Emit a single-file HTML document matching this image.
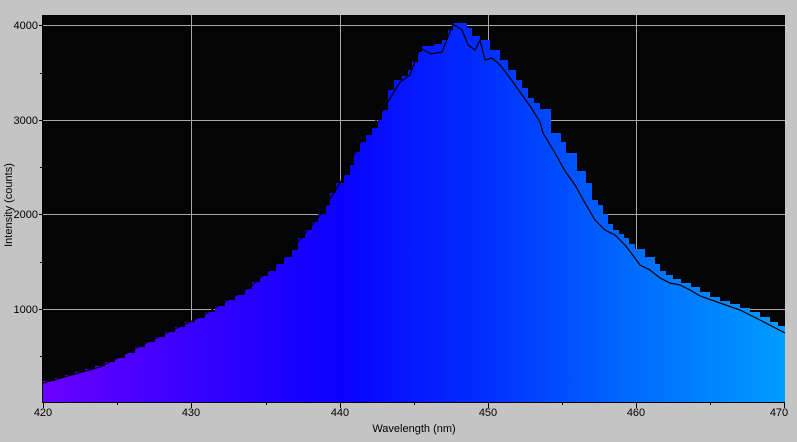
<!DOCTYPE html>
<html><head><meta charset="utf-8"><style>
html,body{margin:0;padding:0;background:#c4c4c4;}
svg{display:block;font-family:"Liberation Sans",sans-serif;}
</style></head><body>
<svg width="797" height="442" viewBox="0 0 797 442" xmlns="http://www.w3.org/2000/svg">
<defs>
<linearGradient id="g" x1="43" x2="785" y1="0" y2="0" gradientUnits="userSpaceOnUse">
<stop offset="0" stop-color="#6a00ff"/>
<stop offset="0.2" stop-color="#3800ff"/>
<stop offset="0.4" stop-color="#0a00ff"/>
<stop offset="0.6" stop-color="#0030ff"/>
<stop offset="0.8" stop-color="#006cff"/>
<stop offset="1" stop-color="#009cff"/>
</linearGradient>
</defs>
<rect x="0" y="0" width="797" height="442" fill="#c4c4c4"/>
<rect x="43" y="15" width="742" height="387" fill="#050405"/>
<g stroke="#a8a8a8" stroke-width="1">
<line x1="191.5" y1="15" x2="191.5" y2="402"/>
<line x1="340.5" y1="15" x2="340.5" y2="402"/>
<line x1="488.5" y1="15" x2="488.5" y2="402"/>
<line x1="636.5" y1="15" x2="636.5" y2="402"/>
<line x1="43" y1="25.5" x2="785" y2="25.5"/>
<line x1="43" y1="120.5" x2="785" y2="120.5"/>
<line x1="43" y1="214.5" x2="785" y2="214.5"/>
<line x1="43" y1="309.5" x2="785" y2="309.5"/>
</g>
<path fill="url(#g)" d="M43,402 V381 H55 V378 H65 V375 H75 V372 H85 V369 H95 V366 H105 V362 H115 V358 H125 V353 H135 V347 H145 V342 H155 V337 H165 V332 H175 V327 H185 V322 H195 V318 H205 V312 H215 V306 H225 V300 H235 V295 H245 V289 H252 V282 H260 V276 H268 V271 H276 V264 H284 V257 H292 V250 H298 V238 H305 V230 H312 V222 H318 V214 H326 V205 H330 V193 H336 V183 H344 V175 H350 V165 H354 V152 H360 V142 H366 V135 H372 V128 H378 V120 H382 V110 H388 V90 H394 V80 H402 V76 H408 V70 H412 V62 H418 V52 H422 V46 H434 V44 H442 V40 H448 V30 H453 V23 H467 V28 H472 V36 H480 V40 H490 V50 H500 V60 H508 V70 H516 V80 H522 V88 H528 V98 H534 V103 H540 V109 H551 V133 H561 V142 H566 V153 H577 V171 H586 V183 H592 V200 H598 V205 H603 V214 H608 V224 H613 V230 H619 V234 H624 V238 H629 V244 H635 V249 H645 V257 H655 V264 H660 V271 H666 V275 H673 V279 H681 V283 H691 V287 H700 V292 H710 V297 H720 V301 H730 V304 H740 V308 H750 V312 H760 V317 H770 V322 H778 V326 H785 V402 Z"/>
<polyline fill="none" stroke="#000" stroke-width="1.2" points="43,383 100,367 150,341 200,317 250,287 290,252 320,215 340,183 360,143 380,115 400,82 410,75 420,48 431,54 442,52 453,24 462,30 468,45 475,50 480,40 485,60 492,58 500,65 510,78 520,92 530,106 540,122 543,133 555,153 565,171 575,185 585,203 595,220 605,230 615,235 625,245 635,258 640,265 650,270 660,278 670,283 680,285 690,290 700,296 720,303 740,310 760,320 785,333"/>
<g stroke="#000" stroke-width="1">
<line x1="43" y1="402.5" x2="785" y2="402.5"/>
<line x1="42.5" y1="15" x2="42.5" y2="403"/>
<line x1="43.5" y1="402" x2="43.5" y2="408"/>
<line x1="191.5" y1="402" x2="191.5" y2="408"/>
<line x1="340.5" y1="402" x2="340.5" y2="408"/>
<line x1="488.5" y1="402" x2="488.5" y2="408"/>
<line x1="636.5" y1="402" x2="636.5" y2="408"/>
<line x1="784.5" y1="402" x2="784.5" y2="408"/>
<line x1="117.5" y1="402" x2="117.5" y2="405"/>
<line x1="266.5" y1="402" x2="266.5" y2="405"/>
<line x1="414.5" y1="402" x2="414.5" y2="405"/>
<line x1="562.5" y1="402" x2="562.5" y2="405"/>
<line x1="710.5" y1="402" x2="710.5" y2="405"/>
<line x1="39" y1="25.5" x2="43" y2="25.5"/>
<line x1="39" y1="120.5" x2="43" y2="120.5"/>
<line x1="39" y1="214.5" x2="43" y2="214.5"/>
<line x1="39" y1="309.5" x2="43" y2="309.5"/>
<line x1="40" y1="73.5" x2="43" y2="73.5"/>
<line x1="40" y1="167.5" x2="43" y2="167.5"/>
<line x1="40" y1="262.5" x2="43" y2="262.5"/>
<line x1="40" y1="356.5" x2="43" y2="356.5"/>
</g>
<g font-size="11" fill="#000" text-anchor="end">
<text x="38" y="29">4000</text>
<text x="38" y="124">3000</text>
<text x="38" y="218">2000</text>
<text x="38" y="313">1000</text>
</g>
<g font-size="11" fill="#000" text-anchor="middle">
<text x="43" y="416">420</text>
<text x="191" y="416">430</text>
<text x="340" y="416">440</text>
<text x="488" y="416">450</text>
<text x="636" y="416">460</text>
<text x="779" y="416">470</text>
<text x="414" y="432">Wavelength (nm)</text>
<text transform="translate(12,205) rotate(-90)">Intensity (counts)</text>
</g>
</svg>
</body></html>
